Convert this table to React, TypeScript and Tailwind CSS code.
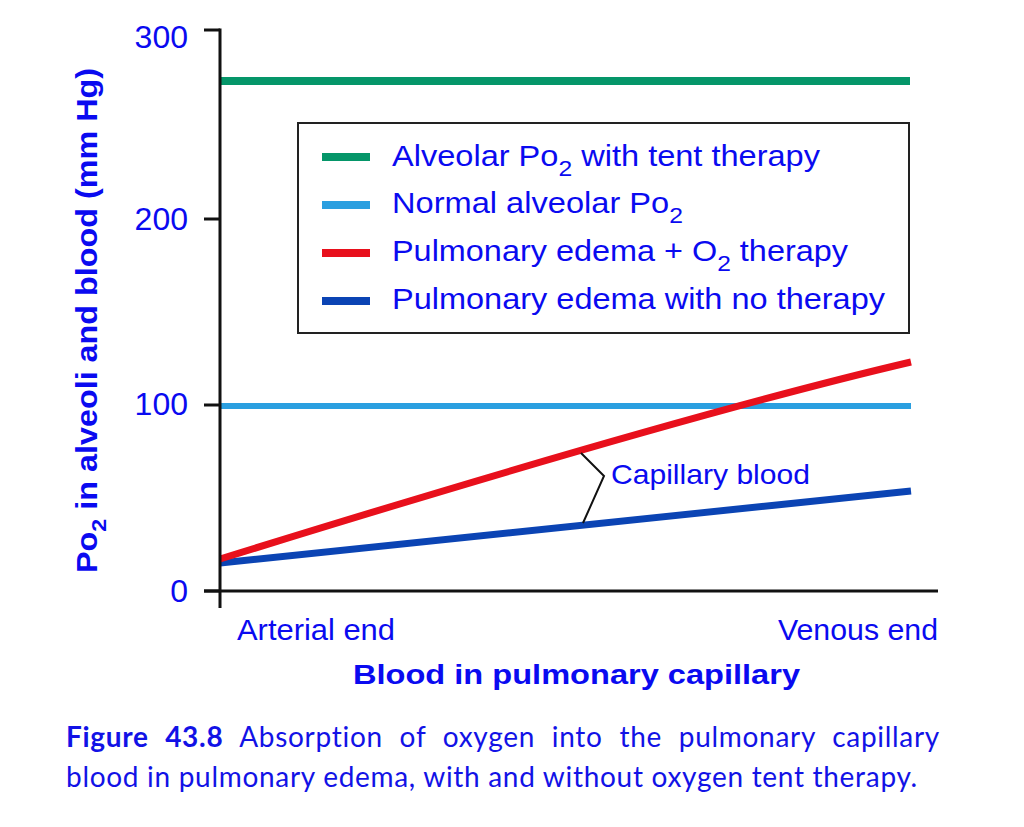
const BLUE = '#0a0af0';
const FONT = '"Liberation Sans", Arial, sans-serif';

const legend = [
  { color: '#059669', y: 157, base: 166, width: 428, parts: ['Alveolar Po', '2', ' with tent therapy'] },
  { color: '#2a9fe0', y: 205, base: 213, width: 291, parts: ['Normal alveolar Po', '2', ''] },
  { color: '#e8101c', y: 253, base: 261, width: 456, parts: ['Pulmonary edema + O', '2', ' therapy'] },
  { color: '#0b44b4', y: 301, base: 309, width: 493, parts: ['Pulmonary edema with no therapy', '', ''] },
];

const ticks = [
  { y: 30, label: '300', base: 48 },
  { y: 219, label: '200', base: 230 },
  { y: 405, label: '100', base: 415 },
  { y: 591, label: '0', base: 602 },
];

function Chart() {
  return (
    <svg width={1024} height={716} viewBox="0 0 1024 716" className="block" fontFamily={FONT}>
      {/* data lines */}
      <line x1={220} y1={81} x2={910} y2={81} stroke="#059669" strokeWidth={8} />
      <line x1={220} y1={406} x2={911} y2={406} stroke="#2a9fe0" strokeWidth={6} />
      <line x1={220} y1={563} x2={911} y2={491} stroke="#0b44b4" strokeWidth={7} />
      <path d="M220 559 Q684 415 911 362" fill="none" stroke="#e8101c" strokeWidth={7} />

      {/* axes */}
      <line x1={220} y1={28.5} x2={220} y2={608} stroke="#111" strokeWidth={3} />
      <line x1={204} y1={591} x2={938} y2={591} stroke="#111" strokeWidth={3} />
      {ticks.map((t) => (
        <g key={t.label}>
          <line x1={204} y1={t.y} x2={220} y2={t.y} stroke="#111" strokeWidth={3} />
          <text x={188} y={t.base} fontSize={32} fill={BLUE} textAnchor="end">
            {t.label}
          </text>
        </g>
      ))}

      {/* y title */}
      <text
        transform="translate(97 320.5) rotate(-90)"
        textAnchor="middle"
        fontSize={29}
        fontWeight={700}
        fill={BLUE}
        textLength={505}
        lengthAdjust="spacingAndGlyphs"
      >
        Po
        <tspan dy={9} fontSize={21}>2</tspan>
        <tspan dy={-9}> in alveoli and blood (mm Hg)</tspan>
      </text>

      {/* legend */}
      <rect x={298} y={123} width={611} height={210} fill="white" stroke="#222" strokeWidth={2} />
      {legend.map((l) => (
        <g key={l.color}>
          <line x1={322} y1={l.y} x2={370} y2={l.y} stroke={l.color} strokeWidth={8} />
          <text
            x={392}
            y={l.base}
            fontSize={29}
            fill={BLUE}
            textLength={l.width}
            lengthAdjust="spacingAndGlyphs"
          >
            {l.parts[0]}
            {l.parts[1] && <tspan dy={10} fontSize={22}>{l.parts[1]}</tspan>}
            {l.parts[2] && <tspan dy={-10}>{l.parts[2]}</tspan>}
          </text>
        </g>
      ))}

      {/* capillary bracket */}
      <polyline points="581,453 604,476 583,523" fill="none" stroke="#111" strokeWidth={2} />
      <text x={611} y={484} fontSize={28} fill={BLUE} textLength={199} lengthAdjust="spacingAndGlyphs">
        Capillary blood
      </text>

      {/* x labels */}
      <text x={237} y={640} fontSize={29} fill={BLUE} textLength={158} lengthAdjust="spacingAndGlyphs">
        Arterial end
      </text>
      <text x={778} y={640} fontSize={29} fill={BLUE} textLength={160} lengthAdjust="spacingAndGlyphs">
        Venous end
      </text>
      <text
        x={353}
        y={684}
        fontSize={28.5}
        fontWeight={700}
        fill={BLUE}
        textLength={447}
        lengthAdjust="spacingAndGlyphs"
      >
        Blood in pulmonary capillary
      </text>
    </svg>
  );
}

export default function App() {
  return (
    <div className="w-[1024px] h-[827px] bg-white overflow-hidden">
      <Chart />
      <div
        className="ml-[66px] w-[874px] text-[28px] leading-[40px] tracking-[0.7px] text-[#1212e6] [font-variant-ligatures:none]"
        style={{ fontFamily: 'Lato, "Open Sans", sans-serif' }}
      >
        <p className="text-justify [text-align-last:justify] whitespace-nowrap">
          <span className="font-bold">Figure 43.8</span> Absorption of oxygen into the pulmonary capillary
        </p>
        <p>blood in pulmonary edema, with and without oxygen tent therapy.</p>
      </div>
    </div>
  );
}
